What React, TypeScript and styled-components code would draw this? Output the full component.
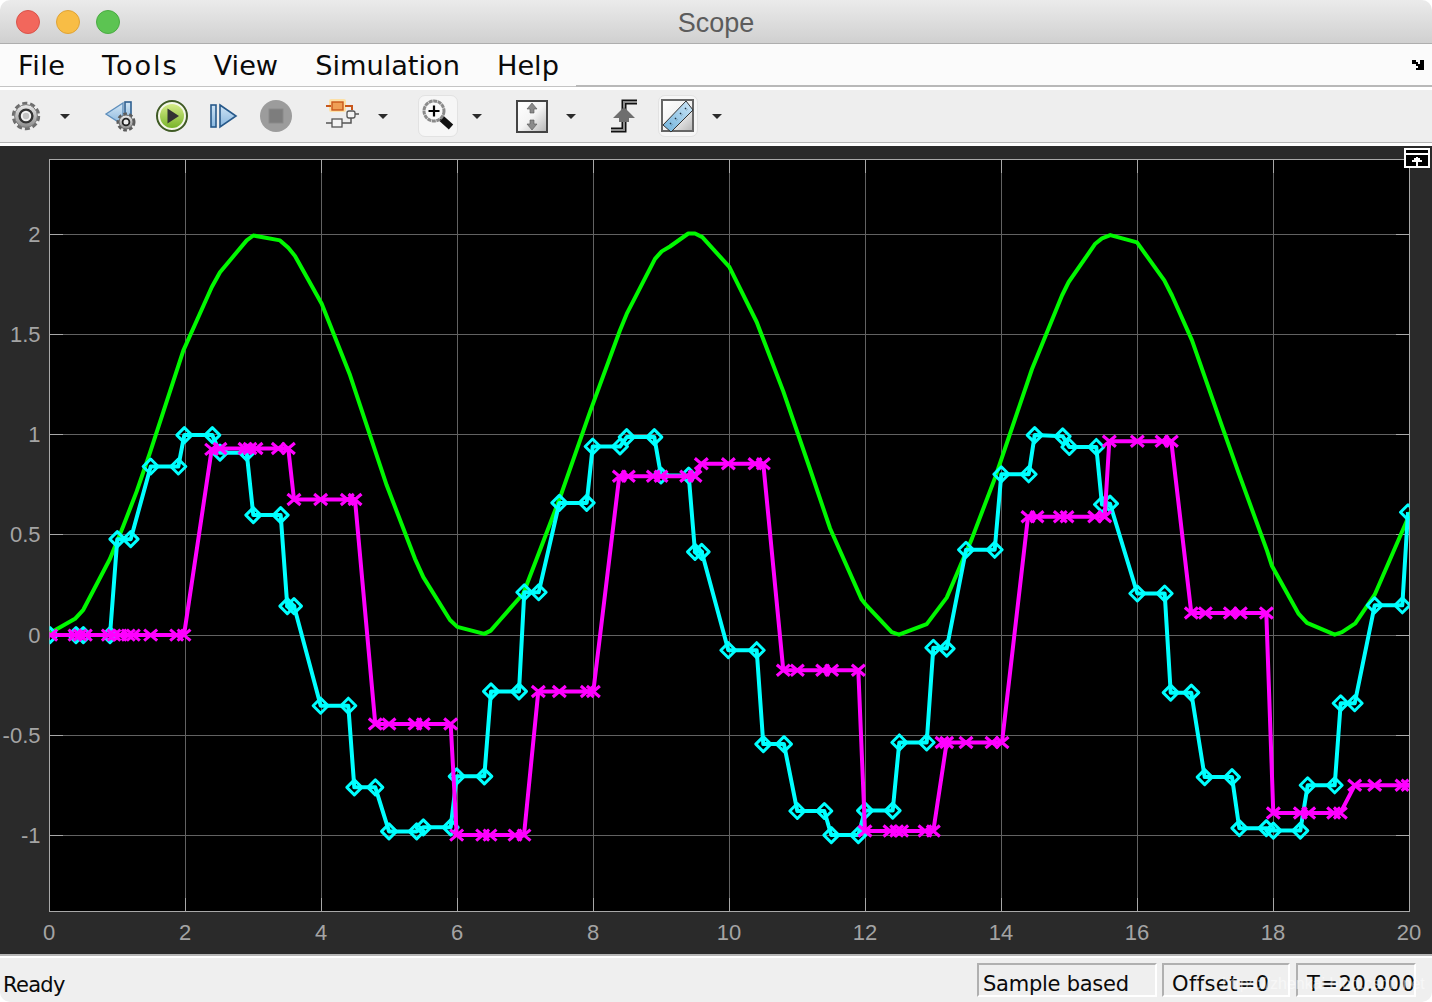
import React from "react";
import styled, { createGlobalStyle } from "styled-components";

const Global = createGlobalStyle`
  html, body { margin: 0; padding: 0; background: #ffffff; }
  #root { width: 1432px; height: 1002px; }
`;

const Win = styled.div`
  width: 1432px; height: 1002px; display: flex; flex-direction: column;
  border-radius: 10px; overflow: hidden; background: #fff; position: relative;
`;
const TitleBar = styled.div`
  height: 43px; flex: none; display: flex; align-items: center; position: relative; justify-content: center;
  background: linear-gradient(#ebebeb, #d0d0d0); border-bottom: 1px solid #aeaeae;
`;
const Lights = styled.div`
  position: absolute; left: 16px; top: 10px; display: flex; gap: 16px;
`;
const Light = styled.span<{ $c: string; $b: string }>`
  width: 24px; height: 24px; border-radius: 50%; box-sizing: border-box;
  background: ${p => p.$c}; border: 1px solid ${p => p.$b};
`;
const Title = styled.div`
  font: 27px "Liberation Sans", Arial, sans-serif; color: #5c5c5c; margin-top: 3px;
`;
const MenuBar = styled.div`
  height: 43px; flex: none; display: flex; background: #fbfbfb;
`;
const MenuList = styled.div`
  width: 576px; box-sizing: border-box; display: flex; align-items: center; gap: 37px; padding: 2px 0 0 18px;
  border-bottom: 1px solid #c4c4c4;
`;
const MenuItem = styled.span<{ $ls?: number }>`
  font: 27.2px "DejaVu Sans", sans-serif; color: #0a0a0a; line-height: 44px;
  letter-spacing: ${p => p.$ls ?? 0}px; margin-right: ${p => -(p.$ls ?? 0)}px;
`;
const MenuRest = styled.div`
  flex: 1; box-sizing: border-box; display: flex; justify-content: flex-end; align-items: flex-start;
  padding: 16px 8px 0 0; border-bottom: 2px solid #b8b8b8; height: 43px;
`;
const Toolbar = styled.div`
  height: 52px; flex: none; margin-top: 3px; box-sizing: border-box; display: flex; align-items: center;
  background: #eeeeee; padding-left: 6px;
`;
const ToolbarEnd = styled.div`
  height: 3px; flex: none; background: #fff; border-top: 1px solid #b4b4b4;
`;
const Tool = styled.div<{ $gap?: number; $on?: boolean }>`
  width: 40px; height: 42px; flex: none; margin-left: ${p => p.$gap ?? 0}px; box-sizing: border-box;
  display: flex; align-items: center; justify-content: center; border-radius: 7px;
  border: 1px solid ${p => (p.$on ? "#e2e2e2" : "transparent")};
  background: ${p => (p.$on ? "#f6f6f6" : "transparent")};
`;
const Drop = styled.div<{ $gap?: number }>`
  width: 20px; flex: none; margin-left: ${p => p.$gap ?? 9}px; display: flex; justify-content: center;
  &::after { content: ""; border-left: 5px solid transparent; border-right: 5px solid transparent; border-top: 5px solid #2b2b2b; }
`;
const ChartPanel = styled.div`
  height: 808px; flex: none; background: #2a2a2a; position: relative;
`;
const ChartSvg = styled.svg`
  display: block; width: 1432px; height: 808px;
`;
const UndockBox = styled.div`
  position: absolute; left: 1404px; top: 2px; width: 26px; height: 20px; background: #000; line-height: 0;
`;
const StatusBar = styled.div`
  flex: 1; display: flex; position: relative; background: #efefef; align-items: flex-start;
  border-top: 2px solid #b6b6b6; box-shadow: inset 0 2px 0 #fff; padding: 7px 16px 0 3px; box-sizing: border-box;
`;
const StatusText = styled.div`
  font: 21px "DejaVu Sans", sans-serif; color: #0a0a0a; flex: 1; line-height: 26px; padding-top: 9px; letter-spacing: -0.7px;
`;
const StatusCell = styled.div<{ $w: number; $gap: number; $pad: number; $ls: number }>`
  width: ${p => p.$w}px; margin-left: ${p => p.$gap}px; height: 34px; box-sizing: border-box; flex: none; overflow: hidden;
  border: 2px solid; border-color: #b0b0b0 #ffffff #ffffff #b0b0b0; padding: 6px 0 0 ${p => p.$pad}px;
  font: 21px "DejaVu Sans", sans-serif; color: #0a0a0a; line-height: 26px; white-space: nowrap;
  letter-spacing: ${p => p.$ls}px;
`;
const Watermark = styled.div`
  position: absolute; left: 1222px; top: 19px; font: 16px "Liberation Sans", sans-serif;
  color: rgba(255, 255, 255, 0.5); white-space: nowrap;
`;

type P = [number, number];
const conv = (ox: number, pts: P[]): P[] => pts.map(([x, y]) => [ox + x / 3, 220 + y / 2.45]);

const green: P[] = [
  ...conv(40, [[30,1012],[105,977],[130,955],[210,830],[250,750],[290,665],[330,570],[430,320],[515,165],[540,128],[620,50],[640,38],[720,50],[745,68],[765,88],[845,205],[930,380],[1040,650],[1125,830],[1150,875],[1230,980],[1252,997],[1333,1014],[1352,1006]]),
  ...conv(500, [[0,980],[70,915],[110,830],[180,680],[270,470],[360,270],[380,230],[465,95],[485,77],[510,65],[565,33],[585,33],[607,42],[688,115],[770,250],[850,420],[930,610],[990,755],[1085,930],[1100,945],[1175,1010],[1197,1016],[1280,990],[1340,925]]),
  ...conv(952, [[0,895],[60,780],[130,630],[240,365],[330,185],[350,152],[430,58],[450,45],[475,37],[555,55],[637,148],[660,185],[720,295],[810,505],[860,620],[945,810],[960,848],[1040,965],[1065,987],[1148,1016],[1170,1010],[1210,988],[1268,918],[1368,730],[1400,670]]),
];
const cyan: P[] = [
  ...conv(40, [[30,1017],[108,1017],[130,1017],[210,1017],[232,782],[272,782],[332,604],[415,604],[433,527],[517,527],[540,570],[620,570],[640,723],[722,723],[742,946],[762,946],[842,1190],[925,1190],[943,1390],[1006,1390],[1047,1498],[1130,1498],[1150,1488],[1232,1488],[1250,1363],[1333,1363],[1353,1155]]),
  ...conv(500, [[57,1155],[73,912],[116,912],[178,693],[260,693],[278,555],[360,555],[380,532],[463,532],[483,626],[566,626],[585,813],[605,813],[685,1054],[770,1054],[790,1284],[852,1284],[892,1448],[973,1448],[994,1507],[1075,1507],[1095,1447],[1178,1447],[1198,1280],[1280,1280],[1300,1048],[1340,1050]]),
  ...conv(952, [[42,808],[128,808],[148,623],[230,623],[248,527],[332,530],[352,556],[433,556],[450,697],[474,695],[556,915],[638,915],[656,1158],[718,1158],[758,1365],[840,1365],[862,1490],[943,1490],[964,1496],[1045,1496],[1067,1385],[1148,1385],[1166,1184],[1208,1184],[1268,944],[1351,944],[1368,716]]),
];
const magenta: P[] = [
  ...conv(40, [[32,1017],[105,1017],[120,1017],[136,1017],[205,1017],[222,1017],[240,1017],[265,1017],[280,1017],[332,1017],[410,1017],[432,1017],[515,562],[540,560],[615,560],[630,560],[648,560],[715,560],[745,560],[762,685],[842,685],[922,685],[945,685],[1006,1235],[1047,1235],[1125,1235],[1150,1235],[1232,1235],[1250,1507],[1328,1507],[1350,1507]]),
  ...conv(500, [[45,1507],[72,1507],[115,1155],[178,1155],[262,1155],[280,1155],[358,628],[385,628],[460,628],[483,628],[560,628],[585,628],[604,597],[685,597],[765,597],[790,597],[850,1103],[892,1103],[968,1103],[995,1103],[1075,1103],[1095,1497],[1170,1497],[1190,1497],[1205,1497],[1275,1497],[1300,1497],[1340,1280]]),
  ...conv(952, [[-30,1280],[42,1280],[120,1280],[150,1280],[228,727],[255,727],[325,727],[345,727],[428,727],[458,727],[472,542],[556,542],[630,542],[658,542],[718,963],[760,963],[835,963],[865,963],[943,963],[964,1453],[1045,1453],[1070,1453],[1145,1453],[1165,1453],[1208,1385],[1268,1385],[1350,1385],[1368,1385]]),
];
const str = (a: P[]) => a.map(p => `${p[0].toFixed(1)},${p[1].toFixed(1)}`).join(" ");

const xs = [49.5, 185.5, 321.5, 457.5, 593.5, 729.5, 865.5, 1001.5, 1137.5, 1273.5, 1409.5];
const xl = ["0","2","4","6","8","10","12","14","16","18","20"];
const ys: [number, string][] = [[234.5,"2"],[334.5,"1.5"],[434.5,"1"],[534.5,"0.5"],[635.5,"0"],[735.5,"-0.5"],[835.5,"-1"]];

function Chart() {
  return (
    <ChartSvg viewBox="0 146 1432 808">
      <defs>
        <clipPath id="plot"><rect x="49.5" y="159.5" width="1360" height="752" /></clipPath>
      </defs>
      <rect x="49.5" y="159.5" width="1360" height="752" fill="#000" />
      <g stroke="#626262" strokeWidth="1">
        {xs.slice(1, 10).map(x => <line key={x} x1={x} x2={x} y1={160} y2={911} />)}
        {ys.map(([y]) => <line key={y} x1={50} x2={1409} y1={y} y2={y} />)}
      </g>
      <g stroke="#a8a8a8" strokeWidth="1">
        {xs.slice(1, 10).map(x => <React.Fragment key={x}><line x1={x} x2={x} y1={160} y2={173} /><line x1={x} x2={x} y1={898} y2={911} /></React.Fragment>)}
        {ys.map(([y]) => <React.Fragment key={y}><line x1={50} x2={63} y1={y} y2={y} /><line x1={1396} x2={1409} y1={y} y2={y} /></React.Fragment>)}
      </g>
      <rect x="49.5" y="159.5" width="1360" height="752" fill="none" stroke="#a8a8a8" strokeWidth="1" />
      <g clipPath="url(#plot)" fill="none" strokeLinejoin="round">
        <polyline points={str(green)} stroke="#00f800" strokeWidth="4" />
        <polyline points={str(cyan)} stroke="#00ffff" strokeWidth="4" />
        {cyan.map((p, i) => (
          <path key={i} d={`M${p[0]} ${p[1] - 7.5}l7.5 7.5l-7.5 7.5l-7.5 -7.5z`} stroke="#00ffff" strokeWidth="3" />
        ))}
        <polyline points={str(magenta)} stroke="#ff00ff" strokeWidth="4" />
        {magenta.map((p, i) => (
          <path key={i} d={`M${p[0] - 6.5} ${p[1] - 5.5}l13 11M${p[0] + 6.5} ${p[1] - 5.5}l-13 11`} stroke="#ff00ff" strokeWidth="3.2" />
        ))}
      </g>
      <g fill="#a4a4a4" fontFamily="'Liberation Sans', Arial, sans-serif" fontSize="22">
        {xs.map((x, i) => <text key={x} x={x - 0.5} y={940} textAnchor="middle">{xl[i]}</text>)}
        {ys.map(([y, t]) => <text key={t} x={40.5} y={y + 7.5} textAnchor="end">{t}</text>)}
      </g>
    </ChartSvg>
  );
}

const GearGrad = ({ id }: { id: string }) => (
  <linearGradient id={id} x1="0" y1="0" x2="0" y2="1">
    <stop offset="0" stopColor="#ececec" />
    <stop offset="1" stopColor="#8c8c8c" />
  </linearGradient>
);

const Gear = () => (
  <svg width="32" height="32" viewBox="0 0 32 32">
    <defs><GearGrad id="g1" /></defs>
    <circle cx="16" cy="16" r="12.6" fill="none" stroke="#6e6e6e" strokeWidth="3.2" strokeDasharray="5 2.9" />
    <circle cx="16" cy="16" r="11.4" fill="url(#g1)" stroke="#7a7a7a" strokeWidth="1" />
    <circle cx="16" cy="16" r="6.4" fill="#f2f2f2" stroke="#333" strokeWidth="2.4" />
    <circle cx="16" cy="16" r="3.2" fill="#c4c4c4" />
  </svg>
);
const BackStep = () => (
  <svg width="36" height="34" viewBox="0 0 36 34">
    <defs>
      <linearGradient id="b1" x1="0" y1="0" x2="0" y2="1"><stop offset="0" stopColor="#d6e8f6" /><stop offset="1" stopColor="#86b4dc" /></linearGradient>
      <GearGrad id="g2" />
    </defs>
    <path d="M3 15L20 4V26Z" fill="url(#b1)" stroke="#5f8fbc" strokeWidth="1.4" />
    <rect x="22" y="3" width="6" height="20" fill="url(#b1)" stroke="#2e5f90" strokeWidth="1.6" />
    <circle cx="23" cy="23" r="8" fill="none" stroke="#5c5c5c" strokeWidth="3" strokeDasharray="3.6 2.2" />
    <circle cx="23" cy="23" r="7" fill="url(#g2)" stroke="#666" />
    <circle cx="23" cy="23" r="3.4" fill="#eee" stroke="#222" strokeWidth="1.8" />
  </svg>
);
const Play = () => (
  <svg width="34" height="34" viewBox="0 0 34 34">
    <defs><linearGradient id="p1" x1="0" y1="0" x2="0" y2="1"><stop offset="0" stopColor="#d6ec88" /><stop offset="1" stopColor="#78b42a" /></linearGradient></defs>
    <circle cx="17" cy="17" r="15" fill="#f4f7e8" stroke="#3f5a24" strokeWidth="2" />
    <circle cx="17" cy="17" r="12" fill="url(#p1)" />
    <path d="M12.5 9.5L24 17L12.5 24.5Z" fill="#333" />
  </svg>
);
const StepFwd = () => (
  <svg width="30" height="28" viewBox="0 0 30 28">
    <defs><linearGradient id="s1" x1="0" y1="0" x2="0" y2="1"><stop offset="0" stopColor="#cfe4f5" /><stop offset="1" stopColor="#88b6de" /></linearGradient></defs>
    <rect x="2" y="3" width="5" height="22" fill="url(#s1)" stroke="#27598a" strokeWidth="1.6" />
    <path d="M11 3L27 14L11 25Z" fill="url(#s1)" stroke="#27598a" strokeWidth="1.6" />
  </svg>
);
const Stop = () => (
  <svg width="34" height="34" viewBox="0 0 34 34">
    <circle cx="17" cy="17" r="16" fill="#9c9c9c" />
    <rect x="10" y="10" width="14" height="14" fill="#7d7d7d" stroke="#8a8a8a" />
  </svg>
);
const Hier = () => (
  <svg width="34" height="34" viewBox="0 0 34 34">
    <rect x="3" y="0" width="17" height="13" rx="2" fill="#fde0a6" />
    <path d="M0 7H5M19 7H26V11" fill="none" stroke="#c8571b" strokeWidth="2" />
    <rect x="6" y="3" width="11" height="8" fill="#ef9f55" stroke="#c8571b" strokeWidth="1.4" />
    <rect x="21" y="12" width="8" height="7" rx="2" fill="#f4f4f4" stroke="#555" strokeWidth="1.3" />
    <path d="M29 15H33M25 19V24H16M6 24H0" fill="none" stroke="#555" strokeWidth="1.5" />
    <rect x="6" y="20" width="10" height="8" fill="#f4f4f4" stroke="#555" strokeWidth="1.3" />
  </svg>
);
const ZoomIcon = () => (
  <svg width="34" height="36" viewBox="0 0 34 36">
    <path d="M20 20L30 29" stroke="#111" strokeWidth="6.5" />
    <circle cx="13" cy="13" r="10" fill="#f8f8f8" stroke="#8a8a8a" strokeWidth="3" strokeDasharray="4 0.6" />
    <path d="M13 7.5V18.5M7.5 13H18.5" stroke="#000" strokeWidth="2.2" />
  </svg>
);
const FitIcon = () => (
  <svg width="34" height="34" viewBox="0 0 34 34">
    <defs><linearGradient id="f1" x1="0" y1="0" x2="1" y2="1"><stop offset="0" stopColor="#ffffff" /><stop offset="0.5" stopColor="#f4f4f4" /><stop offset="1" stopColor="#b4b4b4" /></linearGradient></defs>
    <rect x="2" y="2" width="30" height="31" fill="url(#f1)" stroke="#444" strokeWidth="2" />
    <path d="M17 4L22 10H19V14H15V10H12Z" fill="#8a8a8a" stroke="#555" strokeWidth="0.6" />
    <path d="M17 31L22 25H19V21H15V25H12Z" fill="#8a8a8a" stroke="#555" strokeWidth="0.6" />
  </svg>
);
const ScaleIcon = () => (
  <svg width="30" height="34" viewBox="0 0 30 34">
    <path d="M1 31H14V3H27" fill="none" stroke="#111" strokeWidth="5" />
    <path d="M1 31H14V3H27" fill="none" stroke="#8c8c8c" strokeWidth="2" />
    <path d="M14 8L25 19H19V23H9V19H3Z" fill="#6e6e6e" />
  </svg>
);
const RulerIcon = () => (
  <svg width="36" height="36" viewBox="0 0 36 36">
    <defs>
      <linearGradient id="r1" x1="0" y1="0" x2="1" y2="1"><stop offset="0" stopColor="#fff" /><stop offset="0.55" stopColor="#f0f0f0" /><stop offset="1" stopColor="#b4b4b4" /></linearGradient>
      <linearGradient id="r2" x1="0" y1="1" x2="1" y2="0"><stop offset="0" stopColor="#6fb2dc" /><stop offset="1" stopColor="#cfe6f6" /></linearGradient>
    </defs>
    <rect x="2" y="2" width="31" height="31" fill="url(#r1)" stroke="#666" strokeWidth="2" />
    <path d="M3 27L26 3L33 12L11 34Z" fill="url(#r2)" stroke="#333" strokeWidth="1" />
    <path d="M10 25l2 2M15 20l2 2M20 15l2 2M25 10l2 2" stroke="#234" strokeWidth="1.4" strokeDasharray="1.5 1" />
  </svg>
);
const Dock = () => (
  <svg width="14" height="10" viewBox="0 0 14 10" shapeRendering="crispEdges">
    <path d="M0 2h2v-2h4v2h2v2h2v-4h4v10h-8v-2h2v-2h-2v-2h-4v-2h-2z" fill="#000" />
  </svg>
);
const Undock = () => (
  <svg width="26" height="20" viewBox="0 0 26 20" shapeRendering="crispEdges">
    <path d="M1 1H25V19H1Z" fill="none" stroke="#fff" strokeWidth="2" />
    <rect x="2" y="5" width="22" height="2" fill="#fff" />
    <path d="M12 9h2v1h2v2h2v2h-4v4h-2v-4h-4v-2h2v-2h2z" fill="#fff" />
  </svg>
);

const menus: [string, number][] = [["File", 0.5], ["Tools", 1.9], ["View", 0], ["Simulation", 0], ["Help", 0]];

export default function App() {
  return (
    <>
      <Global />
      <Win>
        <TitleBar>
          <Lights>
            <Light $c="#f2675c" $b="#d9534a" />
            <Light $c="#f8bd45" $b="#dfa336" />
            <Light $c="#5cc452" $b="#4aab43" />
          </Lights>
          <Title>Scope</Title>
        </TitleBar>
        <MenuBar>
          <MenuList>
            {menus.map(([m, ls]) => <MenuItem key={m} $ls={ls}>{m}</MenuItem>)}
          </MenuList>
          <MenuRest><Dock /></MenuRest>
        </MenuBar>
        <Toolbar>
          <Tool><Gear /></Tool>
          <Drop />
          <Tool $gap={26}><BackStep /></Tool>
          <Tool $gap={11}><Play /></Tool>
          <Tool $gap={12}><StepFwd /></Tool>
          <Tool $gap={12}><Stop /></Tool>
          <Tool $gap={27}><Hier /></Tool>
          <Drop $gap={10} />
          <Tool $gap={25} $on><ZoomIcon /></Tool>
          <Drop />
          <Tool $gap={25}><FitIcon /></Tool>
          <Drop />
          <Tool $gap={24}><ScaleIcon /></Tool>
          <Tool $gap={13} $on><RulerIcon /></Tool>
          <Drop />
        </Toolbar>
        <ToolbarEnd />
        <ChartPanel>
          <Chart />
          <UndockBox><Undock /></UndockBox>
        </ChartPanel>
        <StatusBar>
          <StatusText>Ready</StatusText>
          <StatusCell $w={180} $gap={0} $pad={4} $ls={-0.25}>Sample based</StatusCell>
          <StatusCell $w={128} $gap={5} $pad={8} $ls={0.4}>Offset=0</StatusCell>
          <StatusCell $w={120} $gap={6} $pad={9} $ls={0.6}>T=20.000</StatusCell>
          <Watermark>https://zhenkai.blog.csdn.net</Watermark>
        </StatusBar>
      </Win>
    </>
  );
}
